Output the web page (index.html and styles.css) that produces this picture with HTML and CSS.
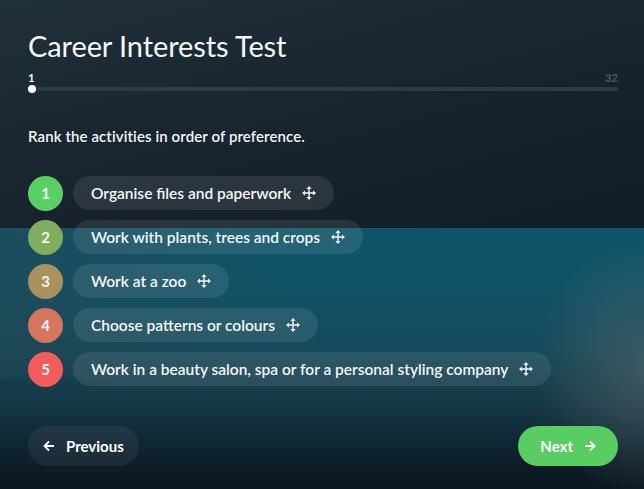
FILE: index.html
```html
<!DOCTYPE html>
<html lang="en">
<head>
    <meta charset="UTF-8">
    <meta name="viewport" content="width=device-width, initial-scale=1.0">
    <title>Career Interests Test</title>
    <link rel="stylesheet" href="styles.css">
</head>
<body>
    <main class="test">
        <h1 class="test-title">Career Interests Test</h1>

        <div class="progress">
            <div class="progress-labels">
                <span>1</span>
                <span class="progress-total">32</span>
            </div>
            <div class="progress-track">
                <span class="progress-dot"></span>
            </div>
        </div>

        <p class="prompt">Rank the activities in order of preference.</p>

        <ol class="rank-list">
            <li class="rank-item">
                <span class="rank-num num-1">1</span>
                <span class="rank-pill">Organise files and paperwork
                    <svg class="move-icon" viewBox="0 0 14 14"><path d="M7 2v10M2 7h10"/><path class="head" d="M7 0l2.6 3h-5.2zM7 14l2.6-3h-5.2zM0 7l3-2.6v5.2zM14 7l-3-2.6v5.2z"/></svg>
                </span>
            </li>
            <li class="rank-item">
                <span class="rank-num num-2">2</span>
                <span class="rank-pill">Work with plants, trees and crops
                    <svg class="move-icon" viewBox="0 0 14 14"><path d="M7 2v10M2 7h10"/><path class="head" d="M7 0l2.6 3h-5.2zM7 14l2.6-3h-5.2zM0 7l3-2.6v5.2zM14 7l-3-2.6v5.2z"/></svg>
                </span>
            </li>
            <li class="rank-item">
                <span class="rank-num num-3">3</span>
                <span class="rank-pill">Work at a zoo
                    <svg class="move-icon" viewBox="0 0 14 14"><path d="M7 2v10M2 7h10"/><path class="head" d="M7 0l2.6 3h-5.2zM7 14l2.6-3h-5.2zM0 7l3-2.6v5.2zM14 7l-3-2.6v5.2z"/></svg>
                </span>
            </li>
            <li class="rank-item">
                <span class="rank-num num-4">4</span>
                <span class="rank-pill">Choose patterns or colours
                    <svg class="move-icon" viewBox="0 0 14 14"><path d="M7 2v10M2 7h10"/><path class="head" d="M7 0l2.6 3h-5.2zM7 14l2.6-3h-5.2zM0 7l3-2.6v5.2zM14 7l-3-2.6v5.2z"/></svg>
                </span>
            </li>
            <li class="rank-item">
                <span class="rank-num num-5">5</span>
                <span class="rank-pill">Work in a beauty salon, spa or for a personal styling company
                    <svg class="move-icon" viewBox="0 0 14 14"><path d="M7 2v10M2 7h10"/><path class="head" d="M7 0l2.6 3h-5.2zM7 14l2.6-3h-5.2zM0 7l3-2.6v5.2zM14 7l-3-2.6v5.2z"/></svg>
                </span>
            </li>
        </ol>

        <div class="nav-buttons">
            <button type="button" class="btn btn-prev">
                <svg class="arrow" viewBox="0 0 12 12"><path d="M11 6H1.5M6 1.5L1.5 6 6 10.5"/></svg>
                Previous
            </button>
            <button type="button" class="btn btn-next">
                Next
                <svg class="arrow" viewBox="0 0 12 12"><path d="M1 6h9.5M6 1.5L10.5 6 6 10.5"/></svg>
            </button>
        </div>
    </main>
</body>
</html>
```

FILE: styles.css
```css
html, body {
    height: 100%;
}

body {
    margin: 0;
    font-family: Lato, "Noto Sans", sans-serif;
    color: #f4f6f7;
    background-color: #141e27;
    background-image:
        radial-gradient(ellipse 110px 130px at 100% 370px, rgba(88, 102, 106, 0.6), rgba(88, 102, 106, 0) 100%),
        linear-gradient(90deg, rgba(40, 70, 80, 0.45) 0%, rgba(40, 70, 80, 0) 45%),
        linear-gradient(180deg, #0e5569 0px, #115367 60px, #154a5b 120px, #153643 180px, #0d202c 230px, #0b1620 261px),
        linear-gradient(165deg, #203039 0%, #17222c 60%, #131d26 100%);
    background-repeat: no-repeat;
    background-size: 100% 100%, 100% 150px, 100% 261px, 100% 228px;
    background-position: 0 0, 0 228px, 0 228px, 0 0;
}

.test {
    padding: 28px 26px 0 28px;
}

.test-title {
    margin: 0;
    font-size: 29px;
    font-weight: 400;
    line-height: 36px;
    letter-spacing: -0.1px;
}

.progress {
    margin-top: 7px;
}

.progress-labels {
    display: flex;
    justify-content: space-between;
    font-size: 11.5px;
    font-weight: 700;
    line-height: 14px;
}

.progress-total {
    color: #4a5864;
}

.progress-track {
    display: flex;
    align-items: center;
    height: 4px;
    margin-top: 2px;
    border-radius: 2px;
    background: #2e3a44;
}

.progress-dot {
    width: 8px;
    height: 8px;
    border-radius: 50%;
    background: #ffffff;
}

.prompt {
    margin: 35px 0 0;
    font-size: 15px;
    font-weight: 600;
    line-height: 20px;
    letter-spacing: 0.1px;
}

.rank-list {
    list-style: none;
    margin: 30px 0 0;
    padding: 0;
    display: flex;
    flex-direction: column;
    gap: 10px;
}

.rank-item {
    display: flex;
    align-items: center;
    gap: 10px;
    height: 34px;
}

.rank-num {
    flex: none;
    width: 35px;
    height: 35px;
    border-radius: 50%;
    display: flex;
    align-items: center;
    justify-content: center;
    font-size: 15px;
    font-weight: 700;
}

.num-1 { background: #5ad064; }
.num-2 { background: #80ad5e; }
.num-3 { background: #a9925b; }
.num-4 { background: #d4765d; }
.num-5 { background: #f45b5b; }

.rank-pill {
    display: flex;
    align-items: center;
    gap: 11px;
    height: 34px;
    padding: 0 18px;
    border-radius: 17px;
    background: rgba(255, 255, 255, 0.09);
    font-size: 15.5px;
    font-weight: 600;
    white-space: nowrap;
}

.move-icon {
    width: 14px;
    height: 14px;
    fill: none;
    stroke: #f4f6f7;
    stroke-width: 1.4;
}

.move-icon .head {
    fill: #f4f6f7;
    stroke: none;
}

.nav-buttons {
    display: flex;
    justify-content: space-between;
    margin-top: 40px;
}

.btn {
    display: flex;
    align-items: center;
    gap: 11px;
    height: 40px;
    border: none;
    border-radius: 20px;
    font-family: inherit;
    font-size: 15px;
    font-weight: 700;
    color: #ffffff;
    cursor: pointer;
}

.btn-prev {
    padding: 0 15px 0 15px;
    background: rgba(255, 255, 255, 0.06);
}

.btn-next {
    padding: 0 22px;
    background: #58cd62;
}

.arrow {
    width: 12px;
    height: 12px;
    fill: none;
    stroke: #ffffff;
    stroke-width: 1.8;
}
```
